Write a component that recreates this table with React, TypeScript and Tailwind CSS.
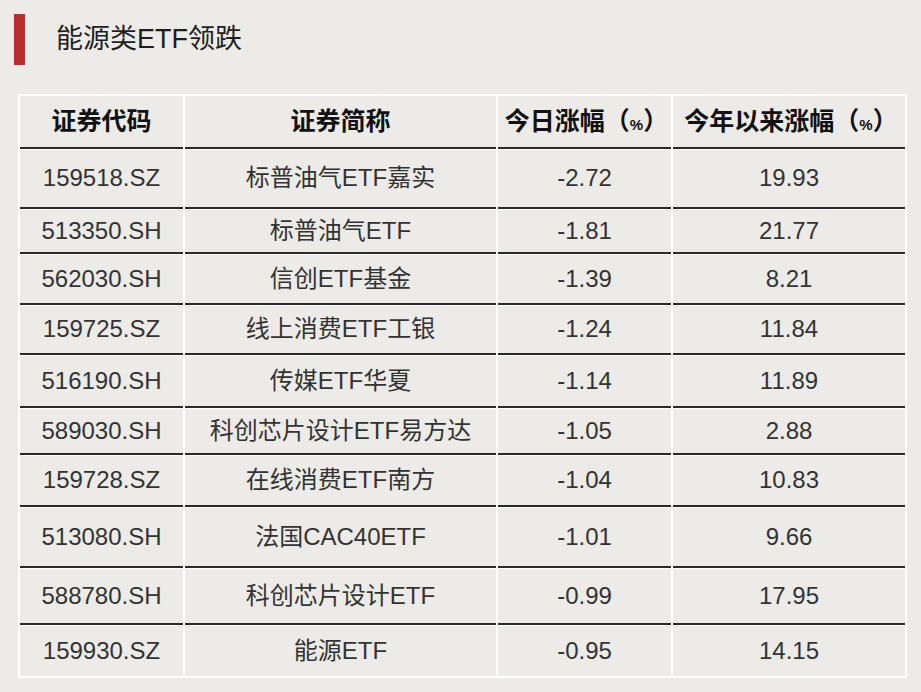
const rows = [
  { code: '159518.SZ', name: '标普油气ETF嘉实', day: '-2.72', ytd: '19.93', h: 'h-[60px]' },
  { code: '513350.SH', name: '标普油气ETF', day: '-1.81', ytd: '21.77', h: 'h-[45px]' },
  { code: '562030.SH', name: '信创ETF基金', day: '-1.39', ytd: '8.21', h: 'h-[51px]' },
  { code: '159725.SZ', name: '线上消费ETF工银', day: '-1.24', ytd: '11.84', h: 'h-[50px]' },
  { code: '516190.SH', name: '传媒ETF华夏', day: '-1.14', ytd: '11.89', h: 'h-[53px]' },
  { code: '589030.SH', name: '科创芯片设计ETF易方达', day: '-1.05', ytd: '2.88', h: 'h-[47px]' },
  { code: '159728.SZ', name: '在线消费ETF南方', day: '-1.04', ytd: '10.83', h: 'h-[52px]' },
  { code: '513080.SH', name: '法国CAC40ETF', day: '-1.01', ytd: '9.66', h: 'h-[61px]' },
  { code: '588780.SH', name: '科创芯片设计ETF', day: '-0.99', ytd: '17.95', h: 'h-[57px]' },
  { code: '159930.SZ', name: '能源ETF', day: '-0.95', ytd: '14.15', h: 'h-[53px]' },
];

const cols = 'grid grid-cols-[163px_311px_173px_232px] gap-x-[2px]';
const font = "font-['Liberation_Sans','Noto_Sans_CJK_SC',sans-serif]";

function Pct() {
  return (
    <>
      （<span className="text-[15px]">%</span>）
    </>
  );
}

export default function App() {
  return (
    <div className={`w-[921px] h-[692px] bg-[#ecebe8] ${font} overflow-hidden`}>
      {/* title */}
      <div className="flex items-center pt-[14px]">
        <div className="ml-[14px] w-[11px] h-[51px] bg-[#b8302e]" />
        <div className="ml-[31px] text-[27px] text-[#1e1e1e] leading-none">能源类ETF领跌</div>
      </div>

      {/* table */}
      <div className="mt-[29px] ml-[18px] w-[889px] bg-white p-[2px]">
        <div className={`${cols} h-[51px] text-[25px] font-bold text-[#111] whitespace-nowrap`}>
          <div className="bg-[#ecebe8] flex items-center justify-center">证券代码</div>
          <div className="bg-[#ecebe8] flex items-center justify-center">证券简称</div>
          <div className="bg-[#ecebe8] flex items-center justify-center pl-[4px]">
            <span>今日涨幅<Pct /></span>
          </div>
          <div className="bg-[#ecebe8] flex items-center justify-center pl-[4px]">
            <span>今年以来涨幅<Pct /></span>
          </div>
        </div>
        {rows.map((r) => (
          <div key={r.code} className={`${cols} ${r.h} text-[24px] text-[#333]`}>
            {[r.code, r.name, r.day, r.ytd].map((v, i) => (
              <div
                key={i}
                className="bg-[#ecebe8] border-t-2 border-[#2a2a2a] shadow-[inset_0_1px_0_#fff] flex items-center justify-center whitespace-nowrap"
              >
                {v}
              </div>
            ))}
          </div>
        ))}
      </div>
    </div>
  );
}
